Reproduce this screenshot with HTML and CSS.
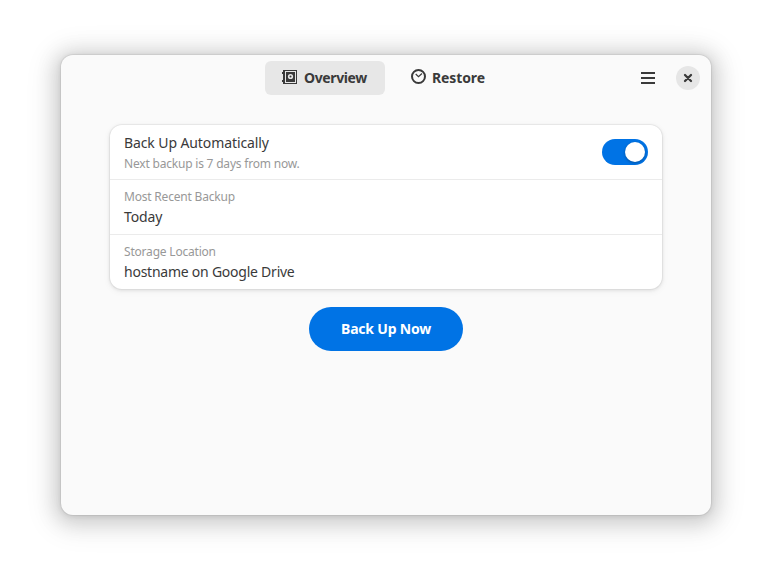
FILE: index.html
```html
<!DOCTYPE html>
<html lang="en">
<head>
<meta charset="utf-8">
<title>Backups</title>
<link rel="stylesheet" href="styles.css">
</head>
<body>
<main class="window">
  <header class="headerbar">
    <div class="start"></div>
    <nav class="switcher">
      <button class="tab overview active">
        <svg class="icon" width="16" height="16" viewBox="0 0 16 16"><path fill="currentColor" fill-rule="evenodd" d="M1 1h14v14H1v-2H0v-2h1V5H0V3h1zM3 2v12h11V2z"/><path fill="currentColor" d="M4 3h9v10H4z"/><circle cx="8.5" cy="7.5" r="1.8" fill="none" stroke="#e7e7e7" stroke-width="1.6"/></svg>
        <span class="label">Overview</span>
      </button>
      <button class="tab restore">
        <svg class="icon" width="16" height="16" viewBox="0 0 16 16" fill="none" stroke="currentColor"><circle cx="7.5" cy="7.5" r="6.5" stroke-width="2"/><path d="M4.7 5l2.8 2.7L11 4.5" stroke-width="1.2"/></svg>
        <span class="label">Restore</span>
      </button>
    </nav>
    <div class="end">
      <button class="menu" aria-label="Menu"><svg width="16" height="16" viewBox="0 0 16 16"><path fill="currentColor" d="M1 2h14v2H1zM1 7h14v2H1zM1 12h14v2H1z"/></svg></button>
      <button class="close" aria-label="Close"><svg width="16" height="16" viewBox="0 0 16 16"><path d="M5 5l6 6M11 5l-6 6" stroke="currentColor" stroke-width="2.3" stroke-linecap="round"/></svg></button>
    </div>
  </header>
  <section class="content">
    <div class="list">
      <div class="row automatic">
        <div class="text"><div class="title">Back Up Automatically</div><div class="subtitle">Next backup is 7 days from now.</div></div>
        <button class="switch" role="switch" aria-checked="true" aria-label="Back Up Automatically"><span class="knob"></span></button>
      </div>
      <div class="row property"><div class="text"><div class="subtitle">Most Recent Backup</div><div class="title">Today</div></div></div>
      <div class="row property location"><div class="text"><div class="subtitle">Storage Location</div><div class="title">hostname on Google Drive</div></div></div>
    </div>
    <button class="backup">Back Up Now</button>
  </section>
</main>
</body>
</html>
```
FILE: styles.css
```css
* { box-sizing: border-box; }
body {
  margin: 0;
  padding: 55px 61px 67px;
  height: 582px;
  background: #fff;
  color: #3a3a3a;
  font: 14px/20px "Noto Sans", sans-serif;
}
button { margin: 0; padding: 0; border: 0; background: none; color: inherit; font: inherit; }
svg { display: block; flex: none; }
.window {
  height: 460px;
  border-radius: 12px;
  background: #fafafa;
  box-shadow: 0 0 0 1px rgba(0,0,0,.05), 0 1px 5px 1px rgba(0,0,0,.07), 0 3px 20px 5px rgba(0,0,0,.15), 0 4px 28px 12px rgba(0,0,0,.07);
}
.headerbar { display: grid; grid-template-columns: 1fr auto 1fr; height: 46px; padding: 6px 11px 6px 6px; }
.switcher { display: flex; gap: 4px; margin-left: 7px; }
.tab { display: flex; align-items: center; gap: 6px; width: 120px; height: 34px; padding: 0 0 1px 17px; border-radius: 6px; font-weight: 700; white-space: nowrap; }
.tab .icon { margin-bottom: 1px; }
.tab.active { background: #e7e7e7; }
.tab.restore { padding-left: 22px; gap: 5px; }
.overview .label { letter-spacing: -.38px; }
.restore .label { letter-spacing: -.12px; }
.end { display: flex; align-items: center; justify-content: flex-end; gap: 11px; }
.menu { display: grid; place-items: center; width: 34px; height: 34px; }
.close { display: grid; place-items: center; width: 24px; height: 24px; border-radius: 50%; background: #e6e6e6; }
.content { display: flex; flex-direction: column; align-items: center; gap: 18px; padding-top: 24px; }
.list { width: 552px; border-radius: 12px; background: #fff; box-shadow: 0 0 0 1px rgba(0,0,0,.04), 0 1px 3px 1px rgba(0,0,0,.07), 0 2px 6px 2px rgba(0,0,0,.03); }
.row { display: flex; align-items: center; justify-content: space-between; height: 55px; padding: 0 14px; border-bottom: 1px solid #ebebeb; }
.row:last-child { border-bottom: 0; height: 54px; }
.title { line-height: 20px; letter-spacing: -.1px; }
.location .title { letter-spacing: -.24px; }
.subtitle { color: #989898; font-size: 12px; line-height: 20px; letter-spacing: -.2px; }
.automatic .text { padding-top: 4px; }
.automatic .subtitle { line-height: 22px; }
.switch { width: 46px; height: 26px; padding: 3px; border-radius: 13px; background: #0073e5; }
.knob { display: block; width: 20px; height: 20px; margin-left: auto; border-radius: 50%; background: #fff; box-shadow: 0 1px 3px rgba(0,0,0,.3); }
.backup { width: 154px; height: 44px; padding-bottom: 1px; border-radius: 22px; background: #0073e5; color: #fff; font-weight: 700; letter-spacing: -.2px; }
```
